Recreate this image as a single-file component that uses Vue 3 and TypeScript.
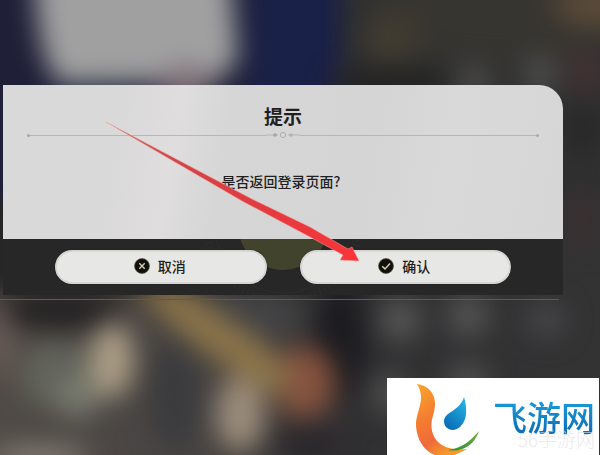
<script setup lang="ts">
import { ref } from 'vue'

interface Blot {
  cx: number
  cy: number
  rx: number
  ry: number
  fill: string
}

const title = '提示'
const message = '是否返回登录页面?'
const choice = ref<'cancel' | 'confirm' | null>(null)

const blots: Blot[] = [
  { cx: 500, cy: 12, rx: 130, ry: 50, fill: '#373530' },
  { cx: 600, cy: 4, rx: 46, ry: 24, fill: '#5a4a38' },
  { cx: 392, cy: 38, rx: 28, ry: 26, fill: '#413c31' },
  { cx: 390, cy: 84, rx: 60, ry: 16, fill: '#222222' },
  { cx: 474, cy: 82, rx: 18, ry: 16, fill: '#4c4c4c' },
  { cx: 540, cy: 74, rx: 18, ry: 20, fill: '#4c4c4c' },
  { cx: 586, cy: 72, rx: 18, ry: 22, fill: '#443233' },
  { cx: 582, cy: 220, rx: 14, ry: 30, fill: '#3b2f31' },
  { cx: 582, cy: 130, rx: 14, ry: 28, fill: '#272727' },
  { cx: 60, cy: 310, rx: 60, ry: 20, fill: '#242223' },
  { cx: 0, cy: 340, rx: 10, ry: 36, fill: '#70605c' },
  { cx: 245, cy: 316, rx: 58, ry: 24, fill: '#434345' },
  { cx: 340, cy: 340, rx: 26, ry: 60, fill: '#1c1c20' },
  { cx: 58, cy: 375, rx: 38, ry: 34, fill: '#62645b' },
  { cx: 78, cy: 396, rx: 22, ry: 22, fill: '#777a6d' },
  { cx: 112, cy: 360, rx: 22, ry: 38, fill: '#ab9d86' },
  { cx: 175, cy: 395, rx: 26, ry: 54, fill: '#3b3b3e' },
  { cx: 40, cy: 456, rx: 50, ry: 10, fill: '#8a847a' },
  { cx: 304, cy: 382, rx: 32, ry: 36, fill: '#85533f' },
  { cx: 240, cy: 414, rx: 25, ry: 38, fill: '#9b8c7b' },
  { cx: 310, cy: 444, rx: 32, ry: 20, fill: '#2a272b' },
  { cx: 400, cy: 320, rx: 22, ry: 22, fill: '#545454' },
  { cx: 468, cy: 316, rx: 22, ry: 22, fill: '#525252' },
  { cx: 546, cy: 320, rx: 20, ry: 18, fill: '#464648' },
  { cx: 468, cy: 380, rx: 22, ry: 18, fill: '#4e4e4e' },
  { cx: 390, cy: 394, rx: 20, ry: 22, fill: '#4e4e4e' }
]
</script>

<template>
  <main class="scene">
    <svg class="backdrop" viewBox="0 0 600 455" preserveAspectRatio="none" aria-hidden="true">
      <defs>
        <filter id="soft" x="-100" y="-100" width="800" height="655" filterUnits="userSpaceOnUse" color-interpolation-filters="sRGB">
          <feGaussianBlur stdDeviation="13" />
        </filter>
        <linearGradient id="lower" x1="0" y1="0" x2="1" y2="0">
          <stop offset="0" stop-color="#514b47" />
          <stop offset="0.35" stop-color="#474341" />
          <stop offset="0.6" stop-color="#302f31" />
          <stop offset="1" stop-color="#333334" />
        </linearGradient>
      </defs>
      <rect width="600" height="455" fill="#303030" />
      <rect y="200" width="600" height="255" fill="url(#lower)" />
      <g filter="url(#soft)">
        <rect x="-60" y="-60" width="402" height="290" fill="#1f2038" />
        <rect x="252" y="-60" width="88" height="260" fill="#1a2148" />
        <path d="M34 -60H226L238 60L215 82L60 84Q34 60 34 -60Z" fill="#a0a0a1" />
        <ellipse cx="186" cy="84" rx="28" ry="18" fill="#7d7076" />
        <rect x="-60" y="200" width="380" height="94" fill="#262626" />
      </g>
      <g filter="url(#soft)">
        <ellipse
          v-for="(b, i) in blots"
          :key="i"
          :cx="b.cx"
          :cy="b.cy"
          :rx="b.rx"
          :ry="b.ry"
          :fill="b.fill"
        />
        <path d="M130 286L180 286L264 342L292 372L282 398L250 384L192 344Z" fill="#8a734a" />
      </g>
    </svg>

    <section class="dialog" role="dialog" aria-labelledby="dialog-title" aria-describedby="dialog-message">
      <div class="panel">
        <h1 id="dialog-title" class="title">{{ title }}</h1>
        <div class="divider" aria-hidden="true">
          <span class="rule rule-left"></span>
          <svg class="ornament" width="34" height="8" viewBox="0 0 34 8">
            <path d="M0 4H6M28 4H34" stroke="#b4b4b5" />
            <path d="M6 4L9 2L12 4L9 6Z" fill="#a9a9aa" />
            <circle cx="17" cy="4" r="2.6" fill="none" stroke="#b0b0b1" />
            <path d="M22 4L25 2L28 4L25 6Z" fill="#b4b4b5" />
          </svg>
          <span class="rule rule-right"></span>
        </div>
        <p id="dialog-message" class="message">{{ message }}</p>
      </div>

      <div class="actions">
        <svg class="emblem" width="160" height="56" viewBox="0 0 160 56" aria-hidden="true">
          <circle cx="80" cy="-14" r="45" fill="#42432d" />
          <g fill="none" stroke="#323232">
            <circle cx="80" cy="-14" r="68" stroke="#2d2d2d" />
            <circle cx="80" cy="-14" r="76" stroke-dasharray="1 4" stroke-width="8" opacity="0.6" />
          </g>
        </svg>
        <button type="button" class="choice" @click="choice = 'cancel'">
          <svg class="mark" width="16" height="16" viewBox="0 0 16 16" aria-hidden="true">
            <circle cx="8" cy="8" r="7.5" fill="#11110c" stroke="#5f5b40" stroke-width="0.7" />
            <path d="M5.3 5.3L10.7 10.7M10.7 5.3L5.3 10.7" stroke="#d5ceb0" stroke-width="1.4" />
          </svg>
          <span>取消</span>
        </button>
        <button type="button" class="choice" @click="choice = 'confirm'">
          <svg class="mark" width="16" height="16" viewBox="0 0 16 16" aria-hidden="true">
            <circle cx="8" cy="8" r="7.5" fill="#11110c" stroke="#5f5b40" stroke-width="0.7" />
            <path d="M4.2 8.2L7 10.9L12 5.6" fill="none" stroke="#d5ceb0" stroke-width="1.5" />
          </svg>
          <span>确认</span>
        </button>
      </div>
      <div class="edge" aria-hidden="true"></div>

      <svg class="pointer" width="256" height="144" viewBox="0 0 256 144" aria-hidden="true">
        <defs>
          <linearGradient id="shaft" x1="0" y1="0" x2="1" y2="1">
            <stop offset="0" stop-color="#b96664" />
            <stop offset="0.3" stop-color="#cf4547" />
            <stop offset="0.65" stop-color="#e43b40" />
            <stop offset="1" stop-color="#fa3439" />
          </linearGradient>
        </defs>
        <path
          d="M2 1L148 78L206 106L244 128L248 126L255 140L236 139L239 134L206 116L138 80Z"
          fill="url(#shaft)"
          stroke="#f6a19b"
          stroke-width="0.5"
        />
      </svg>
    </section>

    <footer class="brand">
      <svg class="logo" width="70" height="77" viewBox="0 0 70 77" aria-hidden="true">
        <defs>
          <linearGradient id="flame" x1="0" y1="0" x2="0.5" y2="1">
            <stop offset="0" stop-color="#f9a72b" />
            <stop offset="0.45" stop-color="#f47d31" />
            <stop offset="0.75" stop-color="#ef6a3b" />
            <stop offset="1" stop-color="#f69a28" />
          </linearGradient>
          <linearGradient id="drop" x1="0.8" y1="0" x2="0.2" y2="1">
            <stop offset="0" stop-color="#25b5e4" />
            <stop offset="1" stop-color="#0869b5" />
          </linearGradient>
          <linearGradient id="leaf" x1="0" y1="1" x2="1" y2="0">
            <stop offset="0" stop-color="#2b8b3e" />
            <stop offset="1" stop-color="#79ad3a" />
          </linearGradient>
        </defs>
        <path
          d="M4 6C15 7 23 16 22 28C21 38 16 44 20 56C24 67 35 73 54 71C46 75 40 79 30 79C14 78 4 64 3 48C2 34 14 22 4 6Z"
          fill="url(#flame)"
        />
        <path d="M51 19C54 29 55 42 47 49C40 55 31 51 31 43C32 33 46 34 51 19Z" fill="url(#drop)" />
        <path d="M66 53C62 66 50 75 35 72C50 70 58 62 66 53Z" fill="url(#leaf)" />
      </svg>
      <span class="brand-name">飞游网</span>
      <span class="watermark">56手游网</span>
    </footer>
  </main>
</template>

<style>
body {
  margin: 0;
  background: #303030;
}
</style>

<style scoped>
.scene {
  position: relative;
  display: flex;
  flex-direction: column;
  box-sizing: border-box;
  min-height: 100vh;
  padding-top: 85px;
  overflow: hidden;
  font-family: "Noto Sans CJK SC", sans-serif;
  color: #1f1f20;
}

.backdrop {
  position: absolute;
  inset: 0;
  width: 100%;
  height: 100%;
}

.dialog {
  position: relative;
  margin: 0 37px 0 3px;
}

.panel {
  box-sizing: border-box;
  min-height: 154px;
  padding: 16px 24px 40px;
  border-radius: 0 24px 0 0;
  background: linear-gradient(100deg, #dad9da 0%, #dad9da 20%, #dfdddd 31%, #d6d6d7 40%, #d5d5d6 65%, #dad9da 78%, #d7d6d7 100%);
  text-align: center;
}

.title {
  margin: 0;
  font-size: 19px;
  line-height: 30px;
  font-weight: 700;
}

.divider {
  display: flex;
  align-items: center;
  height: 8px;
}

.rule {
  position: relative;
  flex: 1;
  height: 1px;
  background: #b7b7b8;
}

.rule::after {
  content: "";
  position: absolute;
  top: -1px;
  width: 3px;
  height: 3px;
  border-radius: 2px;
  background: #a9a9aa;
}

.rule-left::after {
  left: 0;
}

.rule-right::after {
  right: 0;
}

.message {
  margin: 30px 4px 0 0;
  font-size: 14px;
  line-height: 24px;
  font-weight: 500;
}

.actions {
  position: relative;
  display: grid;
  grid-template-columns: 1fr 1fr;
  gap: 33px;
  padding: 11px 52px;
  background: #272727;
}

.emblem {
  position: absolute;
  top: 0;
  left: 50%;
  transform: translateX(-50%);
}

.choice {
  position: relative;
  display: flex;
  align-items: center;
  justify-content: center;
  gap: 8px;
  height: 34px;
  padding: 0 2px 2px 0;
  border: 2px solid #d5d5d4;
  border-radius: 17px;
  background: #e7e7e6;
  box-shadow: 0 0 1px #111;
  color: #1f1f20;
  font-family: inherit;
  font-size: 14px;
  line-height: 20px;
  font-weight: 500;
  cursor: pointer;
}

.edge {
  height: 4px;
  margin: 0 4px 0 -3px;
  border-bottom: 1px solid #5c5b5a;
}

.pointer {
  position: absolute;
  top: 36px;
  left: 101px;
  pointer-events: none;
}

.brand {
  position: relative;
  display: flex;
  align-items: center;
  align-self: flex-end;
  gap: 10px;
  margin-top: auto;
  margin-right: 1px;
  padding: 0 4px 0 26px;
  background: #fff;
}

.logo {
  display: block;
}

.brand-name {
  padding-bottom: 0;
  background: linear-gradient(180deg, #1ba0dd, #0b68b4);
  background-clip: text;
  color: transparent;
  font-size: 34px;
  line-height: 40px;
  font-weight: 500;
}

.watermark {
  position: absolute;
  right: 4px;
  bottom: 4px;
  color: rgba(225, 222, 226, 0.65);
  font-size: 19px;
  line-height: 24px;
  font-weight: 300;
}
</style>
